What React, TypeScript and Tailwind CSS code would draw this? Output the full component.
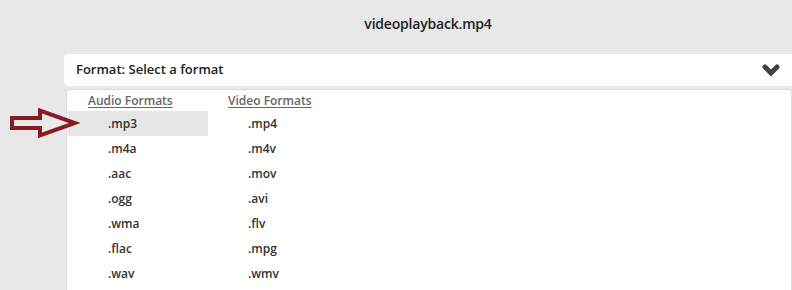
import React from "react";

const audio = [".mp3", ".m4a", ".aac", ".ogg", ".wma", ".flac", ".wav"];
const video = [".mp4", ".m4v", ".mov", ".avi", ".flv", ".mpg", ".wmv"];

function Column({ title, items, active }: { title: string; items: string[]; active?: number }) {
  return (
    <div className="w-[140px] flex flex-col">
      <div className="h-[21px] pl-[20px] flex items-end pb-[1px] text-[12px] font-semibold text-[#666] underline underline-offset-2">
        {title}
      </div>
      {items.map((it, i) => (
        <div
          key={it}
          className={`h-[25px] pl-[40px] flex items-center text-[12px] font-semibold text-[#333] ${i === active ? "bg-[#e6e6e6]" : ""}`}
        >
          {it}
        </div>
      ))}
    </div>
  );
}

export default function App() {
  return (
    <div className="relative w-[792px] h-[290px] bg-[#e8e8e8] overflow-hidden" style={{ fontFamily: '"Open Sans", sans-serif' }}>
      <div className="ml-[64px] flex flex-col">
        <div className="h-[46px] flex items-center justify-center text-[14px] text-[#222] font-semibold tracking-[-0.2px]">
          videoplayback.mp4
        </div>
        <div className="mt-[8px] h-[32px] bg-white rounded-l-[5px] flex items-center justify-between pl-[12px] pr-[12px]">
          <span className="text-[13px] font-semibold text-[#222]">Format: Select a format</span>
          <svg width="18" height="14" viewBox="0 0 18 14">
            <path d="M3 4 L9 10 L15 4" fill="none" stroke="#444" strokeWidth="5" strokeLinecap="round" strokeLinejoin="miter" />
          </svg>
        </div>
        <div className="mt-[3px] ml-[2px] h-[220px] bg-white border border-[#dcdcdc] rounded-t-[4px] flex pl-[1px]">
          <Column title="Audio Formats" items={audio} active={0} />
          <Column title="Video Formats" items={video} />
        </div>
      </div>
      <svg className="absolute left-[8px] top-[107px]" width="72" height="34" viewBox="0 0 72 34">
        <path
          d="M4 11 L32 11 L32 3.5 L67 16 L32 28.5 L32 21 L4 21 Z"
          fill="#ece9e9"
          stroke="#8a1a22"
          strokeWidth="4"
          strokeLinejoin="miter"
        />
      </svg>
    </div>
  );
}
